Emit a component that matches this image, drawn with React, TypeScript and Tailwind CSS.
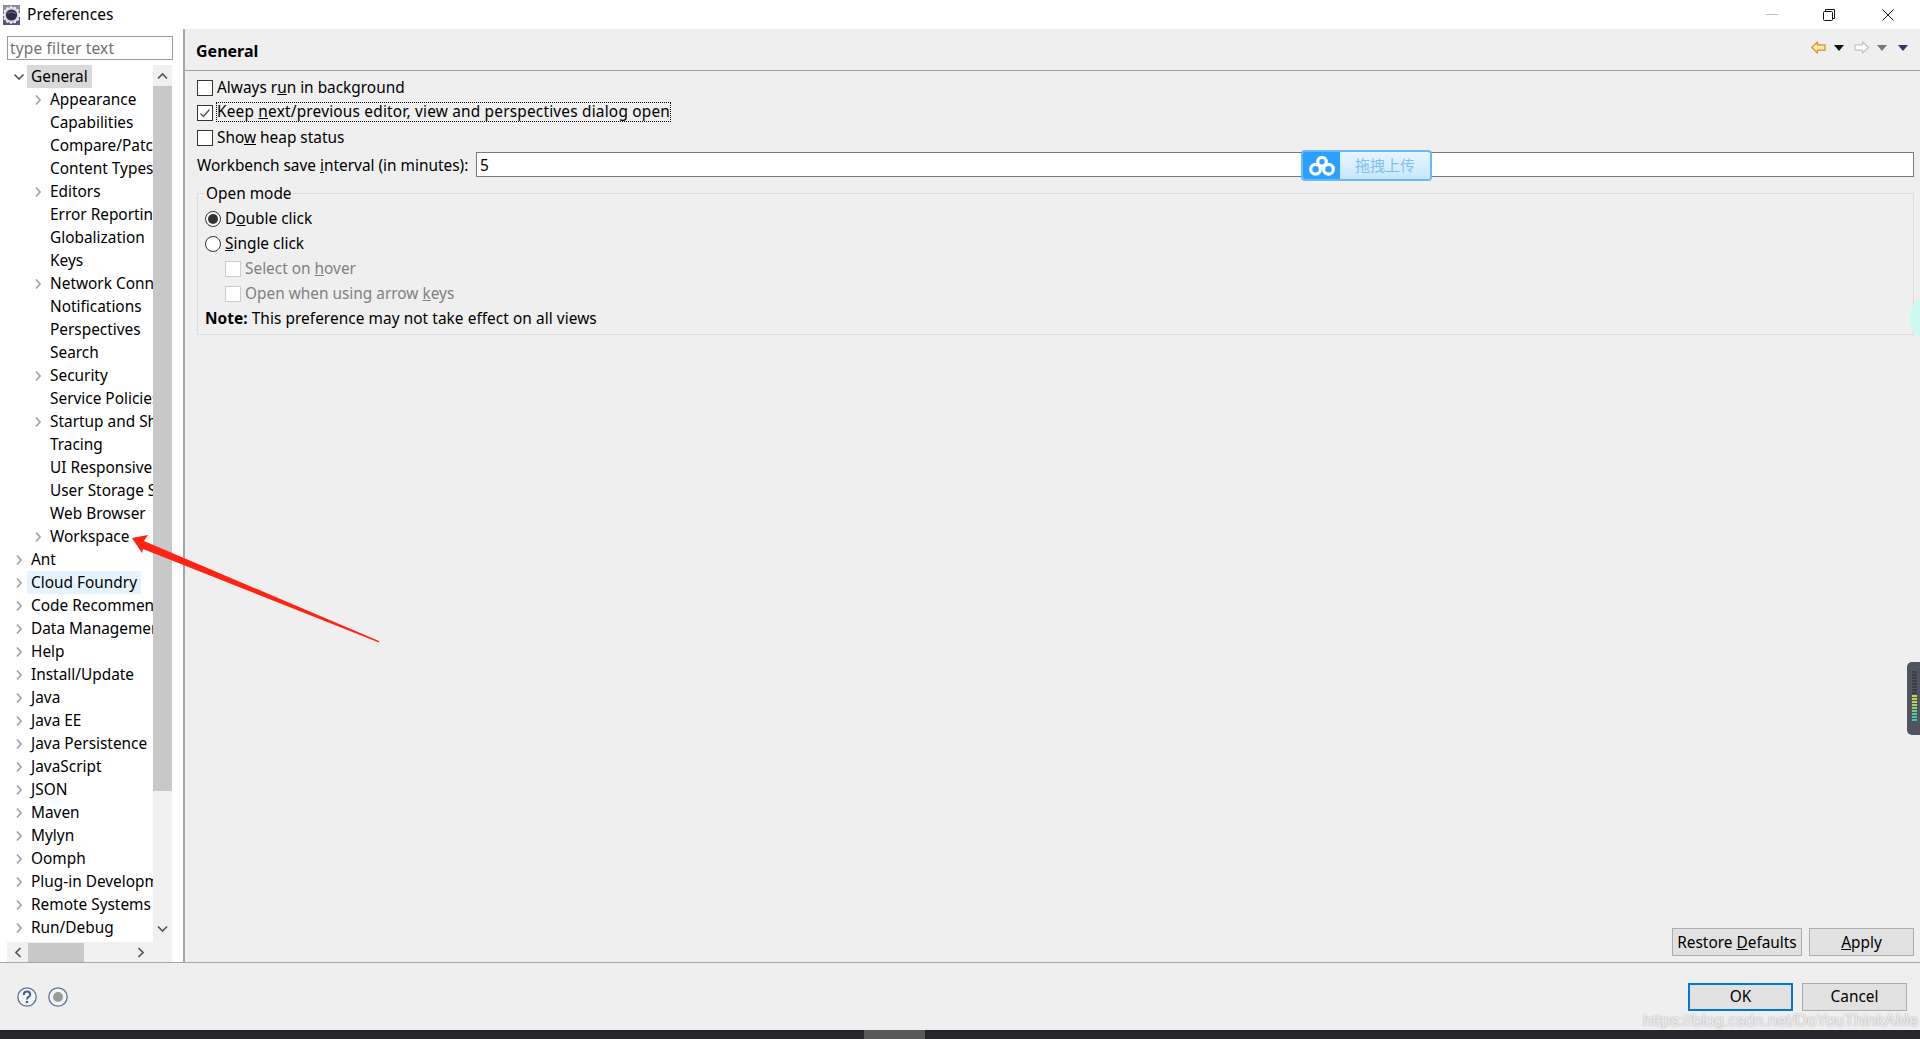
import React from "react";
import { Fragment } from "react";

type TreeRow = {
  label: string;
  level: 0 | 1;
  arrow?: "open" | "closed";
  tone?: "selected" | "hover";
};

const children: [string, boolean][] = [
  ["Appearance", true],
  ["Capabilities", false],
  ["Compare/Patch", false],
  ["Content Types", false],
  ["Editors", true],
  ["Error Reporting", false],
  ["Globalization", false],
  ["Keys", false],
  ["Network Connections", true],
  ["Notifications", false],
  ["Perspectives", false],
  ["Search", false],
  ["Security", true],
  ["Service Policies", false],
  ["Startup and Shutdown", true],
  ["Tracing", false],
  ["UI Responsiveness", false],
  ["User Storage Service", false],
  ["Web Browser", false],
  ["Workspace", true],
];

const roots = [
  "Ant",
  "Cloud Foundry",
  "Code Recommenders",
  "Data Management",
  "Help",
  "Install/Update",
  "Java",
  "Java EE",
  "Java Persistence",
  "JavaScript",
  "JSON",
  "Maven",
  "Mylyn",
  "Oomph",
  "Plug-in Development",
  "Remote Systems",
  "Run/Debug",
];

const rows: TreeRow[] = [
  { label: "General", level: 0, arrow: "open", tone: "selected" },
  ...children.map(([label, more]): TreeRow => ({ label, level: 1, arrow: more ? "closed" : undefined })),
  ...roots.map((label): TreeRow => ({ label, level: 0, arrow: "closed", tone: label === "Cloud Foundry" ? "hover" : undefined })),
];

const Chevron = ({ open }: { open?: boolean }) =>
  open ? (
    <svg width="12" height="10" viewBox="0 0 12 10" className="shrink-0">
      <polyline points="1.5,2.5 6,7 10.5,2.5" fill="none" stroke="#555" strokeWidth="1.6" />
    </svg>
  ) : (
    <svg width="8" height="12" viewBox="0 0 8 12" className="shrink-0">
      <polyline points="2,1.5 6,6 2,10.5" fill="none" stroke="#a6a6a6" strokeWidth="1.8" />
    </svg>
  );

const Check = ({ checked, disabled }: { checked?: boolean; disabled?: boolean }) => (
  <span
    className={`flex size-4 shrink-0 items-center justify-center border bg-white ${disabled ? "border-[#cccccc]" : "border-[#333333]"}`}
  >
    {checked && (
      <svg width="12" height="12" viewBox="0 0 12 12">
        <polyline points="1.5,6.5 4.5,9.5 10.5,2.5" fill="none" stroke="#555" strokeWidth="1.3" />
      </svg>
    )}
  </span>
);

const Radio = ({ checked }: { checked?: boolean }) => (
  <span className="flex size-4 shrink-0 items-center justify-center rounded-full border border-[#333333] bg-white">
    {checked && <span className="size-[10px] rounded-full bg-[#333333]" />}
  </span>
);

const FlatButton = ({ className, children }: { className: string; children: React.ReactNode }) => (
  <button className={`flex h-[28px] items-center justify-center bg-[#e1e1e1] pt-px ${className}`}>{children}</button>
);

const AppIcon = () => (
  <svg width="17" height="20" viewBox="0 0 17 20">
    <rect width="17" height="20" fill="#5d4f86" />
    <rect x="0" y="0" width="17" height="6" fill="#8d8aa0" />
    <circle cx="8.5" cy="10" r="8" fill="#d8d8dc" />
    <circle cx="8.5" cy="10" r="8" fill="none" stroke="#f2f2f2" strokeWidth="1.6" strokeDasharray="2 2" />
    <circle cx="8.5" cy="10" r="5.6" fill="#2f2c45" />
    <path d="M4.5 8.5 Q8.5 5.5 12.5 8.5" fill="none" stroke="#77749a" strokeWidth="1.2" />
  </svg>
);

const ArrowIcon = ({ back }: { back?: boolean }) => (
  <svg width="15" height="13" viewBox="0 0 15 13" className={back ? "" : "-scale-x-100"}>
    <path
      d="M0.8 6.5 L6.5 0.8 V3.8 H14 V9.2 H6.5 V12.2 Z"
      fill={back ? "#ffe7a6" : "#ffffff"}
      stroke={back ? "#d3922c" : "#c4c4c4"}
      strokeWidth="1.2"
      strokeLinejoin="round"
    />
  </svg>
);

const Drop = ({ color }: { color: string }) => (
  <svg width="10" height="6" viewBox="0 0 10 6">
    <polygon points="0,0 10,0 5,6" fill={color} />
  </svg>
);

export default function App() {
  return (
    <div className="relative flex h-[1039px] w-[1920px] flex-col overflow-hidden bg-white font-['Noto_Sans',sans-serif] text-[15.4px] text-black">
      {/* Title bar */}
      <div className="flex h-[29px] shrink-0 items-center">
        <div className="ml-[3px]">
          <AppIcon />
        </div>
        <span className="ml-[7px] text-[15.5px]">Preferences</span>
        <div className="ml-auto mr-[26px] flex items-center">
          <span className="h-px w-[12px] bg-[#c0c0c0]" />
          <svg width="12" height="12" viewBox="0 0 12 12" className="ml-[45px]">
            <path d="M2.5 2.5 V0.5 H11.5 V9.5 H9.5" fill="none" stroke="#111" />
            <rect x="0.5" y="2.5" width="9" height="9" rx="1" fill="none" stroke="#111" />
          </svg>
          <svg width="12" height="12" viewBox="0 0 12 12" className="ml-[47px]">
            <path d="M0.5 0.5 L11.5 11.5 M11.5 0.5 L0.5 11.5" stroke="#111" strokeWidth="1" />
          </svg>
        </div>
      </div>

      <div className="flex min-h-0 flex-1">
        {/* Left tree */}
        <div className="flex w-[183px] shrink-0 flex-col pl-[7px] pr-[11px] pt-[7px]">
          <input
            readOnly
            value="type filter text"
            className="h-[24px] w-[166px] shrink-0 border border-[#9a9a9a] px-[2px] tracking-[0.2px] text-[#707070] outline-none"
          />
          <div className="mt-[5px] flex min-h-0 flex-1">
            <div className="min-w-0 flex-1 overflow-hidden">
              {rows.map((row) => (
                <div key={row.label} className="relative flex h-[23px] items-center">
                  {row.arrow && (
                    <span className={`absolute flex w-[12px] justify-center ${row.level === 1 ? "left-[25px]" : "left-[6px]"}`}>
                      <Chevron open={row.arrow === "open"} />
                    </span>
                  )}
                  <span
                    className={`flex h-[23px] items-center whitespace-nowrap px-[4px] ${row.level === 1 ? "ml-[39px]" : "ml-[20px]"} ${row.tone === "selected" ? "bg-[#d9d9d9]" : ""} ${row.tone === "hover" ? "bg-[#e5f3ff]" : ""}`}
                  >
                    {row.label}
                  </span>
                </div>
              ))}
            </div>
            <div className="flex w-[19px] shrink-0 flex-col bg-[#f0f0f0]">
              <div className="flex h-[21px] shrink-0 items-center justify-center">
                <svg width="11" height="8" viewBox="0 0 11 8">
                  <polyline points="1,6.5 5.5,2 10,6.5" fill="none" stroke="#555" strokeWidth="1.7" />
                </svg>
              </div>
              <div className="h-[705px] shrink-0 bg-[#c8c8c8]" />
              <div className="mb-[3px] mt-auto flex h-[21px] shrink-0 items-center justify-center">
                <svg width="11" height="8" viewBox="0 0 11 8">
                  <polyline points="1,1.5 5.5,6 10,1.5" fill="none" stroke="#555" strokeWidth="1.7" />
                </svg>
              </div>
            </div>
          </div>
          <div className="flex h-[20px] shrink-0 items-center bg-[#f0f0f0]">
            <div className="flex w-[21px] shrink-0 items-center justify-center">
              <svg width="8" height="11" viewBox="0 0 8 11">
                <polyline points="6.5,1 2,5.5 6.5,10" fill="none" stroke="#555" strokeWidth="1.7" />
              </svg>
            </div>
            <div className="h-[19px] w-[56px] shrink-0 bg-[#c8c8c8]" />
            <div className="ml-[46px] flex w-[21px] shrink-0 items-center justify-center">
              <svg width="8" height="11" viewBox="0 0 8 11">
                <polyline points="1.5,1 6,5.5 1.5,10" fill="none" stroke="#555" strokeWidth="1.7" />
              </svg>
            </div>
          </div>
        </div>

        {/* Right page */}
        <div className="flex min-w-0 flex-1 flex-col border-l-2 border-[#a6a6a6] bg-[#efefef]">
          <div className="flex h-[42px] shrink-0 items-center border-b border-[#a0a0a0] pl-[11px]">
            <span className="mt-[2px] text-[16px] font-bold">General</span>
            <div className="mb-[4px] ml-auto mr-[12px] flex items-center">
              <ArrowIcon back />
              <span className="ml-[8px]">
                <Drop color="#111111" />
              </span>
              <span className="ml-[10px]">
                <ArrowIcon />
              </span>
              <span className="ml-[8px]">
                <Drop color="#777777" />
              </span>
              <span className="ml-[11px]">
                <Drop color="#3f2f6b" />
              </span>
            </div>
          </div>

          <div className="flex min-h-0 flex-1 flex-col pl-[12px] pr-[6px] pt-[4px]">
            <label className="flex h-[25px] items-center gap-[4px]">
              <Check />
              <span>
                Always r<u>u</u>n in background
              </span>
            </label>
            <label className="flex h-[25px] items-center gap-[3px]">
              <Check checked />
              <span className="mb-px border border-dotted border-black leading-[18px] tracking-[0.2px]">
                Keep <u>n</u>ext/previous editor, view and perspectives dialog open
              </span>
            </label>
            <label className="flex h-[25px] items-center gap-[4px]">
              <Check />
              <span>
                Sho<u>w</u> heap status
              </span>
            </label>
            <div className="mt-[2px] flex h-[25px] items-center">
              <span className="w-[279px] shrink-0 pt-[2px]">
                Workbench save <u>i</u>nterval (in minutes):
              </span>
              <input readOnly value="5" className="h-[25px] min-w-0 flex-1 border border-[#7a7a7a] bg-white px-[3px] pt-px outline-none" />
            </div>

            <fieldset className="mt-[4px] border border-[#dcdcdc] pb-[3px] pl-[7px] pt-px">
              <legend className="px-px pt-[2px] leading-[22px]">Open mode</legend>
              <label className="flex h-[25px] items-center gap-[4px]">
                <Radio checked />
                <span>
                  D<u>o</u>uble click
                </span>
              </label>
              <label className="flex h-[25px] items-center gap-[4px]">
                <Radio />
                <span>
                  <u>S</u>ingle click
                </span>
              </label>
              <label className="flex h-[25px] items-center gap-[4px] pl-[20px] text-[#808080]">
                <Check disabled />
                <span>
                  Select on <u>h</u>over
                </span>
              </label>
              <label className="flex h-[25px] items-center gap-[4px] pl-[20px] text-[#808080]">
                <Check disabled />
                <span>
                  Open when using arrow <u>k</u>eys
                </span>
              </label>
              <p className="flex h-[25px] items-center whitespace-pre tracking-[0.06px]">
                <b>Note:</b> This preference may not take effect on all views
              </p>
            </fieldset>

            <div className="mb-[6px] mt-auto flex justify-end gap-[7px]">
              <FlatButton className="w-[130px] border border-[#adadad]">
                <span>
                  Restore <u>D</u>efaults
                </span>
              </FlatButton>
              <FlatButton className="w-[105px] border border-[#adadad]">
                <span>
                  <u>A</u>pply
                </span>
              </FlatButton>
            </div>
          </div>
        </div>
      </div>

      {/* Bottom bar */}
      <div className="flex h-[68px] shrink-0 items-center border-t border-[#a6a6a6] bg-[#efefef] pl-[17px] pr-[13px]">
        <svg width="20" height="20" viewBox="0 0 20 20">
          <circle cx="10" cy="10" r="9.2" fill="#f4f4f4" stroke="#5d7396" strokeWidth="1.3" />
          <path d="M6.8 8 Q6.8 4.6 10 4.6 Q13.2 4.6 13.2 7.6 Q13.2 9.2 11.2 10.2 Q10 10.9 10 12.4" fill="none" stroke="#45608a" strokeWidth="2" />
          <circle cx="10" cy="15" r="1.3" fill="#45608a" />
        </svg>
        <svg width="20" height="20" viewBox="0 0 20 20" className="ml-[11px]">
          <circle cx="10" cy="10" r="9.2" fill="#f4f4f4" stroke="#5d7396" strokeWidth="1.3" />
          <circle cx="10" cy="10" r="5" fill="#9a9a9a" />
        </svg>
        <div className="ml-auto flex gap-[9px]">
          <FlatButton className="w-[105px] border-2 border-[#0078d7]">OK</FlatButton>
          <FlatButton className="w-[105px] border border-[#adadad]">Cancel</FlatButton>
        </div>
      </div>

      {/* Dark strip of the desktop under the window */}
      <div className="flex h-[9px] shrink-0 bg-[#25262a]">
        <div className="ml-[864px] w-[61px] bg-[#58585a]" />
      </div>

      {/* Red arrow drawn on the screenshot */}
      <svg className="pointer-events-none absolute left-0 top-0" width="400" height="660">
        <polygon points="132,538 148,535 144,541 379,641 379,642.5 143,549 142,553" fill="#ff2314" />
      </svg>

      {/* Upload widget */}
      <div className="absolute left-[1301px] top-[150px] flex h-[31px] w-[131px] overflow-hidden rounded-[4px] border-2 border-[#66b8ff]">
        <div className="flex w-[37px] items-center justify-center bg-[#2aa0ff]">
          <svg width="28" height="22" viewBox="0 0 26 20">
            <g fill="none" stroke="#ffffff" strokeWidth="3">
              <circle cx="13" cy="6" r="4" />
              <circle cx="7" cy="13" r="4.5" />
              <circle cx="19" cy="13" r="4.5" />
            </g>
          </svg>
        </div>
        <div className="flex flex-1 items-center justify-center bg-gradient-to-b from-[#e8f6ff] to-[#c6e7ff] font-['Noto_Sans_CJK_SC',sans-serif] text-[15px] text-[#7fc0f3]">
          拖拽上传
        </div>
      </div>

      {/* Floating desktop gadgets at the right edge */}
      <div className="absolute left-[1909px] top-[296px] size-[44px] rounded-full bg-[#ccfbf4]" />
      <div className="absolute left-[1907px] top-[662px] flex h-[73px] w-[20px] flex-col items-start gap-[1px] rounded-[5px] bg-[#50545f] pl-[5px] pt-[9px]">
        {["#3b3e47", "#3b3e47", "#3b3e47", "#3b3e47", "#3b3e47", "#3b3e47", "#3b3e47", "#3b3e47", "#d8cf4a", "#cfd054", "#bcd25a", "#a6d364", "#8fd070", "#74cc80", "#5ac990", "#45c8a0", "#35ccb4"].map((c, i) => (
          <Fragment key={i}>
            <span className="h-[2px] w-[5px]" style={{ backgroundColor: c }} />
          </Fragment>
        ))}
      </div>

      {/* Blog watermark */}
      <div className="absolute left-[1643px] top-[1008px] whitespace-nowrap font-['Liberation_Sans',sans-serif] text-[16.5px] text-white/70 [text-shadow:0_0_2px_rgba(0,0,0,0.35)]">
        https://blog.csdn.net/DoYouThinkAMe
      </div>
    </div>
  );
}
